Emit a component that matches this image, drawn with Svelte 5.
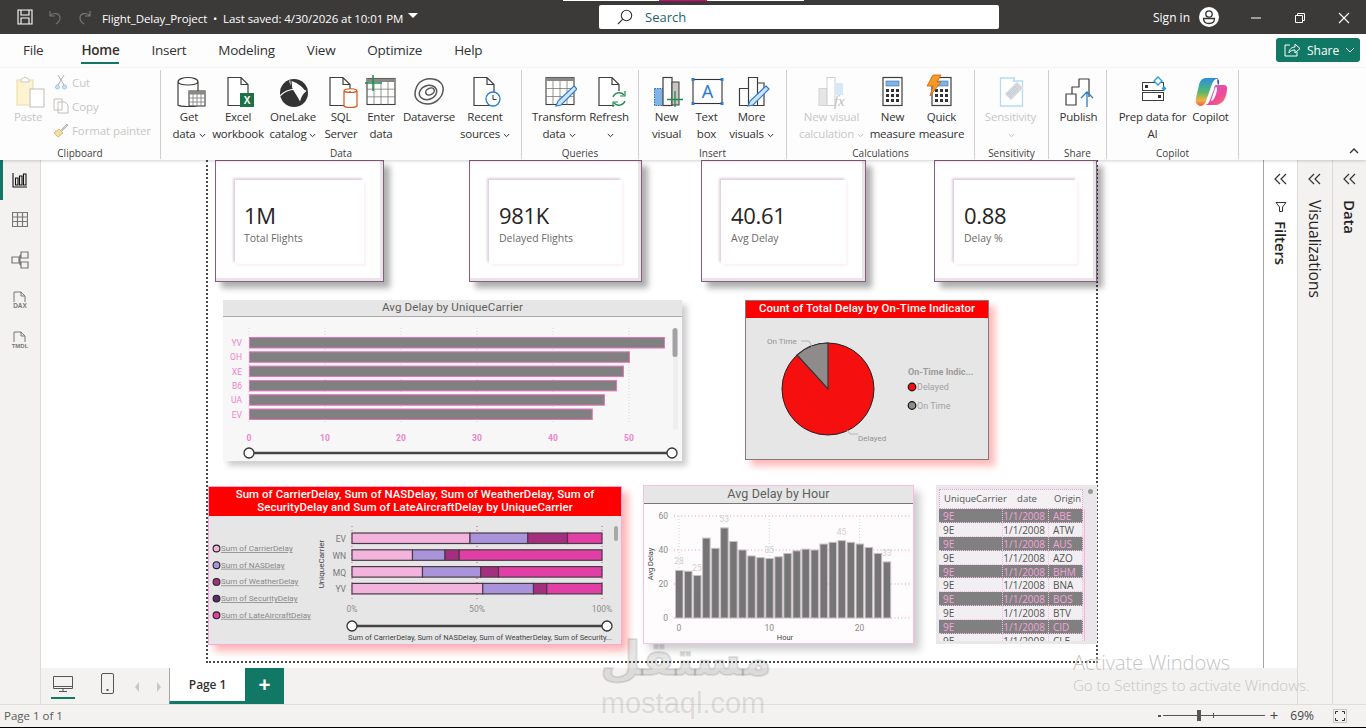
<script>
  const ink = '#3f3e3d';
  const doc = (x) => `<path d="M${x} 3.5h13l7 7v21h-20z M${x + 13} 3.5v7h7" fill="#fff" stroke="${ink}" stroke-width="1.2"/>`;
  const bars = `<path d="M5.5 14.5h9v17h-9z M14.5 3.5h9v28h-9z M23.5 9h6.5v22.5h-6.5z" fill="#fff" stroke="${ink}" stroke-width="1.2"/>`;
  const pencil = (x, y) => `<g transform="translate(${x} ${y})"><path d="M19 0l3 3-16 16-5 1 2-5z" fill="#cfe4f7" stroke="#2b7cd3" stroke-width="1.2"/></g>`;
  const grid = (x, y, w, h) => {
    let s = `<rect x="${x}" y="${y}" width="${w}" height="${h}" fill="#fff" stroke="${ink}" stroke-width="1.1"/>`;
    s += `<rect x="${x}" y="${y}" width="${w}" height="3.5" fill="#8a8886"/>`;
    for (let i = 1; i < 4; i++) s += `<path d="M${x + (w * i) / 4} ${y + 3}v${h - 3}" stroke="#7a7977" stroke-width=".8"/>`;
    for (let i = 1; i < 3; i++) s += `<path d="M${x} ${y + 3 + ((h - 3) * i) / 3}h${w}" stroke="#7a7977" stroke-width=".8"/>`;
    return s;
  };
  const calc = (x) => {
    let s = `<rect x="${x}" y="3.5" width="19" height="28" fill="#fff" stroke="${ink}" stroke-width="1.2"/>`;
    s += `<rect x="${x + 3}" y="7" width="13" height="5" fill="#7fb4e6" stroke="#3b6ea5" stroke-width=".6"/>`;
    for (let r = 0; r < 3; r++) for (let c = 0; c < 3; c++) s += `<rect x="${x + 3 + c * 5}" y="${15 + r * 5}" width="3" height="3" fill="#333"/>`;
    return s;
  };

  const icons = {
    paste: `<rect x="7" y="6" width="16" height="25" fill="#fdf3d0" stroke="#e6d9a8"/><path d="M11 6c0-2 2-2 3-2 0-1 2-1 2 0 1 0 3 0 3 2v2h-8z" fill="#fff" stroke="#c8c6c4"/><rect x="20" y="15" width="14" height="18" fill="#fff" stroke="#c0bebc"/>`,
    getdata: `<path d="M7 8c0-6 20-6 20 0v23c-2 2-18 2-20 0z M7 8c2 4 18 4 20 0" fill="#fff" stroke="${ink}" stroke-width="1.2"/>` + grid(18, 17, 16, 15),
    excel: doc(8) + `<rect x="20" y="19" width="14" height="14" fill="#1e7145"/><text x="27" y="30" font-size="10" font-weight="700" fill="#fff" text-anchor="middle" font-family="Liberation Sans">X</text>`,
    onelake: `<circle cx="19" cy="19" r="14" fill="#333"/><path d="M14 6.500c7 1 13 6 17 11-3 2-5 6-6 10-3-7-9-13-11-21z" fill="#fff"/><path d="M16 7c0 7 1 13 3 20" stroke="#333" fill="none" stroke-width="1.3"/><path d="M5 22c7-8 16-8 26-5" stroke="#fff" fill="none" stroke-width="1.1"/>`,
    sql: doc(7) + `<path d="M21 17c0-3 13-3 13 0v15c-2 2-11 2-13 0z M21 17c2 2 11 2 13 0" fill="#fff" stroke="#d1571c" stroke-width="1.2"/>`,
    enter: grid(4, 4.5, 28, 26) + `<path d="M2 9h17 M10 1v16" stroke="#1e8a4c" stroke-width="1.5"/>`,
    dataverse: `<g fill="none" stroke="#555" stroke-width="1.5"><path d="M6 12c3-6 10-8 16-7 7 1 11 6 10 12-1 7-8 13-15 13C10 30 4 26 4 20c0-3 1-6 2-8z"/><ellipse cx="17" cy="18.500" rx="9" ry="7" transform="rotate(-20 17 18.500)"/><ellipse cx="19" cy="17.500" rx="4.500" ry="3.200" transform="rotate(-25 19 17.500)"/></g>`,
    recent: doc(7) + `<circle cx="26" cy="25" r="7" fill="#fff" stroke="#2b7cd3" stroke-width="1.3"/><path d="M26 21v4.500h3.500" fill="none" stroke="#333"/>`,
    transform: grid(5, 3.5, 28, 27) + pencil(14, 12),
    refresh: doc(8) + `<circle cx="28" cy="25" r="8" fill="#fff"/><path d="M22 23a6.500 6.500 0 0 1 11-2 M34 27a6.500 6.500 0 0 1-11 2" fill="none" stroke="#1e8a4c" stroke-width="1.3"/><path d="M34 17v5h-5 M22 33v-5h5" fill="none" stroke="#1e8a4c" stroke-width="1.2"/>`,
    newvisual: `<rect x="5.5" y="14.5" width="9" height="17" fill="#7fb4e6" stroke="#2b6cb0" stroke-dasharray="1.5 1"/><rect x="14" y="3.5" width="9" height="28" fill="#fff" stroke="${ink}" stroke-width="1.2"/><rect x="23" y="8" width="7" height="23" fill="#c8c6c4" stroke="${ink}"/><path d="M18 25.500h16 M26 17v16" stroke="#1e8a4c" stroke-width="1.3"/>`,
    textbox: `<rect x="4" y="5.5" width="29" height="24" fill="#fff" stroke="#333" stroke-width="1.1"/><g fill="#2b7cd3"><rect x="2.5" y="4" width="3" height="3"/><rect x="31.5" y="4" width="3" height="3"/><rect x="2.5" y="28" width="3" height="3"/><rect x="31.5" y="28" width="3" height="3"/></g><text x="18.5" y="24" font-size="18" fill="#2b7cd3" text-anchor="middle" font-family="Noto Sans">A</text>`,
    more: bars + pencil(13, 12),
    visualcalc: `<rect x="5" y="14.5" width="8" height="17" fill="#e6e6e6" stroke="#d4d4d4"/><rect x="13" y="3.5" width="8" height="28" fill="#fff" stroke="#cfcfcf"/><rect x="21" y="9" width="8" height="12" fill="#d5e9f9"/><text x="20" y="32" font-size="15" font-style="italic" fill="#bdbdbd" font-family="Liberation Serif">fx</text>`,
    measure: calc(8),
    quick: calc(8) + `<path d="M9 1h8l-4 7h4L6 22l3-10H3z" fill="#f59a23" stroke="#c8601a" stroke-width=".8"/>`,
    sensitivity: `<path d="M7.5 4h14l-1 3 9 0v25h-22z" fill="#fff" stroke="#b3dcf5" stroke-width="1.3"/><path d="M12 20l12-12 6 6-12 12z" fill="#d6d6d6" stroke="#e8e8e8"/><path d="M14 21l9-9 M16 23l9-9" stroke="#a9d4ef"/>`,
    publish: `<path d="M5 20h10v11H5z M11 20v-7h7V5h10v18" fill="#fff" stroke="${ink}" stroke-width="1.2" stroke-linejoin="round"/><path d="M26 18v15 M20 24l6-6 6 6" fill="none" stroke="#2b7cd3" stroke-width="1.3"/>`,
    prep: `<rect x="7.5" y="8.5" width="21" height="8" fill="#fff" stroke="${ink}"/><rect x="10" y="11" width="3" height="3" fill="#333"/><rect x="7.5" y="18.5" width="21" height="8" fill="#fff" stroke="${ink}"/><rect x="23" y="21" width="3" height="3" fill="#333"/><path d="M23 3l4 4-4 4-4-4z" fill="#fff" stroke="#2b9cd8" stroke-width="1.3"/><path d="M29 12l2.500 2.500-2.500 2.500-2.500-2.500z" fill="#2b9cd8"/>`,
    copilot: `<defs><linearGradient id="cpa" x1="0" y1="0" x2="0" y2="1"><stop offset="0" stop-color="#2a8fdc"/><stop offset=".5" stop-color="#55b96a"/><stop offset=".8" stop-color="#f2b13c"/><stop offset="1" stop-color="#ec5b4a"/></linearGradient><linearGradient id="cpb" x1="0" y1="0" x2="1" y2="1"><stop offset="0" stop-color="#b86fd0"/><stop offset=".6" stop-color="#f0479a"/><stop offset="1" stop-color="#f6785a"/></linearGradient></defs><path d="M13 4h12c-3 1-5 3-6 6l-6 17c-1 3-3 5-6 5-3-1-5-3-4-8l3-13c1-4 3-7 7-7z" fill="url(#cpa)"/><path d="M23 11h8c2 0 3 1 3 3 0 9-4 17-12 17H11c3 0 5-2 6-5l4-11c0-2 1-4 2-4z" fill="url(#cpb)"/><path d="M23 13c-1 0-2 5-4 11-1 2-1 3 0 3 2-1 4-6 5-11 0-2 0-3-1-3z" fill="#fff"/><path d="M25 4l-3 0c2 0 5 1 4 6l-1 1c-1-3-1-5 0-7z" fill="#2d4fb0"/>`,
  };

  const groups = [
    { label: 'Data', items: [
      { icon: 'getdata', lines: ['Get', 'data'], caret: true, w: 42 },
      { icon: 'excel', lines: ['Excel', 'workbook'], w: 56 },
      { icon: 'onelake', lines: ['OneLake', 'catalog'], caret: true, w: 54 },
      { icon: 'sql', lines: ['SQL', 'Server'], w: 42 },
      { icon: 'enter', lines: ['Enter', 'data'], w: 38 },
      { icon: 'dataverse', lines: ['Dataverse'], w: 58 },
      { icon: 'recent', lines: ['Recent', 'sources'], caret: true, w: 54 },
    ], width: 361 },
    { label: 'Queries', items: [
      { icon: 'transform', lines: ['Transform', 'data'], caret: true, w: 58 },
      { icon: 'refresh', lines: ['Refresh', ''], caret: true, w: 42 },
    ], width: 117 },
    { label: 'Insert', items: [
      { icon: 'newvisual', lines: ['New', 'visual'], w: 38 },
      { icon: 'textbox', lines: ['Text', 'box'], w: 42 },
      { icon: 'more', lines: ['More', 'visuals'], caret: true, w: 48 },
    ], width: 148 },
    { label: 'Calculations', items: [
      { icon: 'visualcalc', lines: ['New visual', 'calculation'], caret: true, w: 70, off: true },
      { icon: 'measure', lines: ['New', 'measure'], w: 52 },
      { icon: 'quick', lines: ['Quick', 'measure'], w: 46 },
    ], width: 188 },
    { label: 'Sensitivity', items: [
      { icon: 'sensitivity', lines: ['Sensitivity', ''], caret: true, w: 66, off: true },
    ], width: 74 },
    { label: 'Share', items: [{ icon: 'publish', lines: ['Publish'], w: 50 }], width: 58 },
    { label: 'Copilot', items: [
      { icon: 'prep', lines: ['Prep data for', 'AI'], w: 72 },
      { icon: 'copilot', lines: ['Copilot'], w: 44 },
    ], width: 132 },
  ];

  const tabs = ['File', 'Home', 'Insert', 'Modeling', 'View', 'Optimize', 'Help'];

  const cards = [
    { value: '1M', label: 'Total Flights', cls: 'c1' },
    { value: '981K', label: 'Delayed Flights', cls: 'c2' },
    { value: '40.61', label: 'Avg Delay', cls: 'c3' },
    { value: '0.88', label: 'Delay %', cls: 'c4' },
  ];

  const carriers = [['YV', 54.6], ['OH', 50], ['XE', 49.2], ['B6', 48.3], ['UA', 46.7], ['EV', 45.1]];

  const stackColors = ['#f2b3dc', '#a994db', '#a52f7f', '#e13fa6'];
  const stacked = [
    ['EV', [47.2, 23.1, 15.9, 13.8]],
    ['WN', [24.2, 13, 5.7, 57.1]],
    ['MQ', [28.2, 23.3, 7.1, 41.4]],
    ['YV', [52.3, 20.3, 5.3, 22.1]],
  ];
  const stackLegend = [
    ['Sum of CarrierDelay', '#f2b3dc'],
    ['Sum of NASDelay', '#a994db'],
    ['Sum of WeatherDelay', '#a52f7f'],
    ['Sum of SecurityDelay', '#5c2a6e'],
    ['Sum of LateAircraftDelay', '#e13fa6'],
  ];
  const segments = (vals) => {
    let x = 0;
    return vals.map((v, i) => {
      const s = { x: x * 2.5, w: v * 2.5, fill: stackColors[i] };
      x += v;
      return s;
    });
  };

  const hours = [28, 27.5, 25, 47, 41, 53, 45, 40, 36.5, 35.5, 35, 36, 38, 39.5, 40.5, 40, 43.5, 44.5, 45.5, 44.5, 43.5, 41.5, 38, 33];
  const hourLabels = { 0: 28, 2: 25, 5: 53, 10: 35, 18: 45, 23: 33 };

  const origins = ['ABE', 'ATW', 'AUS', 'AZO', 'BHM', 'BNA', 'BOS', 'BTV', 'CID', 'CLE'];
</script>

{#snippet caret()}
  <svg class="caret" viewBox="0 0 7 5" width="7" height="5"><path d="M.8 1l2.700 2.700L6.200 1" fill="none" stroke="currentColor" stroke-width="1"/></svg>
{/snippet}

{#snippet chevrons()}
  <svg class="chev" viewBox="0 0 14 12" width="14" height="12"><path d="M6 1L1 6l5 5 M12 1L7 6l5 5" fill="none" stroke="#333" stroke-width="1.200"/></svg>
{/snippet}

<div class="app">
  <header class="titlebar">
    <svg class="save" viewBox="0 0 16 16" width="16" height="16"><path d="M1 1h14v14H1z M4 1v5h8V1 M4 15V9h8v6" fill="none" stroke="#fff" stroke-width="1.100"/></svg>
    <svg class="undo" viewBox="0 0 16 16" width="16" height="16"><path d="M3 2v5h5 M3 7c3-4 10-3 10 2 0 2-1 4-4 6" fill="none" stroke="#7b7a79" stroke-width="1.200"/></svg>
    <svg class="redo" viewBox="0 0 16 16" width="16" height="16"><path d="M13 2v5H8 M13 7c-3-4-10-3-10 2 0 2 1 4 4 6" fill="none" stroke="#7b7a79" stroke-width="1.200"/></svg>
    <span class="doc-title">Flight_Delay_Project &nbsp;•&nbsp; Last saved: 4/30/2026 at 10:01 PM</span>
    <span class="title-caret"></span>
    <div class="search-wrap">
      <div class="search">
        <svg viewBox="0 0 16 16" width="16" height="16"><circle cx="9.500" cy="6.500" r="5.200" fill="none" stroke="#333" stroke-width="1.100"/><path d="M5.800 10.200L1 15" stroke="#333" stroke-width="1.100"/></svg>
        <span>Search</span>
      </div>
    </div>
    <span class="signin">Sign in</span>
    <svg class="avatar" viewBox="0 0 20 20" width="20" height="20"><circle cx="10" cy="10" r="10" fill="#fff"/><circle cx="10" cy="7" r="3.200" fill="none" stroke="#333" stroke-width="1.300"/><path d="M4.500 11.500h11c0 3-2 5-5.500 5s-5.500-2-5.500-5z" fill="none" stroke="#333" stroke-width="1.300"/></svg>
    <div class="win">
      <svg viewBox="0 0 12 12" width="12" height="12"><path d="M1 6h10" stroke="#fff"/></svg>
      <svg viewBox="0 0 12 12" width="12" height="12"><path d="M1.500 3.500h7v7h-7z M3.500 3V1.500h7v7H9" fill="none" stroke="#fff"/></svg>
      <svg viewBox="0 0 12 12" width="12" height="12"><path d="M1 1l10 10M11 1L1 11" stroke="#fff" stroke-width="1.100"/></svg>
    </div>
  </header>

  <nav class="tabs">
    {#each tabs as t}
      <span class="tab" class:active={t === 'Home'}>{t}</span>
    {/each}
    <button class="share" type="button">
      <svg viewBox="0 0 18 16" width="18" height="16"><path d="M7 3H2v11h12v-4" fill="none" stroke="#fff"/><path d="M6 11c0-4 3-6 6-6V2l5 4.500L12 11V8c-3 0-5 1-6 3z" fill="none" stroke="#fff"/></svg>
      Share
      <svg viewBox="0 0 10 6" width="10" height="6"><path d="M1 1l4 4 4-4" fill="none" stroke="#fff"/></svg>
    </button>
  </nav>

  <section class="ribbon">
    <div class="group clipboard">
      <div class="group-body">
        <div class="rbtn off paste">
          <svg viewBox="0 0 36 36" width="36" height="36">{@html icons.paste}</svg>
          <div class="rlabel">Paste</div>
        </div>
        <div class="small-list">
          <div class="small">
            <svg viewBox="0 0 14 16" width="16" height="16"><path d="M4 1l6 10M10 1L4 11" stroke="#b0aeac" fill="none"/><circle cx="3.500" cy="13" r="2" fill="#cfe4f7" stroke="#9cc3e6"/><circle cx="10.500" cy="13" r="2" fill="#cfe4f7" stroke="#9cc3e6"/></svg>
            Cut
          </div>
          <div class="small">
            <svg viewBox="0 0 16 16" width="16" height="16"><path d="M1 1h8v11H1z M5 4h7l3 3v8H5z" fill="#fff" stroke="#c0bebc"/></svg>
            Copy
          </div>
          <div class="small">
            <svg viewBox="0 0 16 16" width="16" height="16"><path d="M1 11l5-4 4 4-5 4z" fill="#f5dfa8" stroke="#d8b877"/><path d="M8 8l6-6 1 1-6 6" fill="#cfcdcb" stroke="#b8b6b4"/></svg>
            Format painter
          </div>
        </div>
      </div>
      <div class="group-label">Clipboard</div>
    </div>

    {#each groups as g}
      <div class="group g-{g.label}" style="width: {g.width}px">
        <div class="group-body">
          {#each g.items as b}
            <div class="rbtn" class:off={b.off} style="width: {b.w}px">
              <svg viewBox="0 0 36 36" width="36" height="36">{@html icons[b.icon]}</svg>
              <div class="rlabel">
                {#each b.lines as line, i}
                  <div class="rline">{line}{#if b.caret && i === b.lines.length - 1}{@render caret()}{/if}</div>
                {/each}
              </div>
            </div>
          {/each}
        </div>
        <div class="group-label">{g.label}</div>
      </div>
    {/each}
    <svg class="collapse" viewBox="0 0 10 6" width="10" height="6"><path d="M1 5l4-4 4 4" fill="none" stroke="#333" stroke-width="1.400"/></svg>
  </section>

  <div class="workspace">
    <aside class="leftnav">
      <div class="nav-item active">
        <svg viewBox="0 0 16 16" width="16" height="16"><path d="M1 1v14h14 M3.500 13V6h2.500v7z M7.500 13V4H10v9z M11.500 13V2H14v11z" fill="none" stroke="#111" stroke-width="1.100"/></svg>
      </div>
      <div class="nav-item">
        <svg viewBox="0 0 16 16" width="16" height="16"><path d="M.5 .5h15v14h-15z M.5 5h15 M.5 9.500h15 M5.500 .5v14 M10.500 .5v14" fill="none" stroke="#777" stroke-width="1.200"/></svg>
      </div>
      <div class="nav-item">
        <svg viewBox="0 0 18 18" width="18" height="18"><path d="M1 6h7v6H1z M10 1h7v6h-7z M10 11h7v6h-7z M8 9h1 M9 4v10 M9 4h1 M9 14h1" fill="none" stroke="#777" stroke-width="1.200"/></svg>
      </div>
      <div class="nav-item">
        <svg viewBox="0 0 20 18" width="20" height="18"><path d="M4 11V1h7l4 4v6 M11 1v4h4" fill="none" stroke="#777"/><text x="10" y="16.500" font-size="6.500" font-weight="700" text-anchor="middle" fill="#777" font-family="Liberation Sans">DAX</text></svg>
      </div>
      <div class="nav-item">
        <svg viewBox="0 0 22 18" width="22" height="18"><path d="M5 11V1h7l4 4v6 M12 1v4h4" fill="none" stroke="#777"/><text x="11" y="16.500" font-size="6" font-weight="700" text-anchor="middle" fill="#777" font-family="Liberation Sans">TMDL</text></svg>
      </div>
    </aside>

    <div class="center">
      <div class="upper">
        <main class="canvas">
          <div class="page">
            {#each cards as c}
              <div class="card {c.cls}">
                <div class="card-inner">
                  <div class="card-value">{c.value}</div>
                  <div class="card-label">{c.label}</div>
                </div>
              </div>
            {/each}

            <div class="visual v-bars">
              <div class="vtitle grey">Avg Delay by UniqueCarrier</div>
              <svg viewBox="0 0 459 144" width="459" height="144">
                {#each [0, 10, 20, 30, 40, 50] as t}
                  <line class="vgrid" x1={26 + t * 7.6} x2={26 + t * 7.6} y1="11" y2="106" />
                  <text class="xtick" x={26 + t * 7.6} y="124" text-anchor="middle">{t}</text>
                {/each}
                {#each carriers as [name, v], i}
                  <rect class="hbar" x="26.5" y={20.5 + i * 14.3} width={v * 7.6} height="10.5" />
                  <text class="cat" x="19" y={29 + i * 14.3} text-anchor="end">{name}</text>
                {/each}
                <rect x="450" y="11" width="5" height="102" rx="2.5" fill="#efedef" />
                <rect x="449.5" y="11" width="5" height="29" rx="2.5" fill="#a3a1a3" />
                <line class="slider" x1="26" x2="449" y1="136" y2="136" />
                <circle class="handle" cx="26" cy="136" r="5" />
                <circle class="handle" cx="449" cy="136" r="5" />
              </svg>
            </div>

            <div class="visual v-pie">
              <div class="vtitle red">Count of Total Delay by On-Time Indicator</div>
              <svg viewBox="0 0 241 142" width="241" height="142">
                <circle cx="82" cy="71" r="46" fill="#f50f0f" stroke="#222" />
                <path d="M82 71V25A46 46 0 0 0 51 37z" fill="#8f8b8b" stroke="#333" stroke-width="1.2" />
                <path class="leader" d="M55 23h8l3 6" />
                <text class="pie-lbl" x="21" y="26">On Time</text>
                <path class="leader" d="M101 112l3 4h8" />
                <text class="pie-lbl" x="112" y="123">Delayed</text>
                <text class="pie-legend" x="162" y="57">On-Time Indic...</text>
                <circle cx="166" cy="69" r="3.8" fill="#f50f0f" stroke="#111" stroke-width="1.2" />
                <text class="pie-lbl big" x="171" y="72">Delayed</text>
                <circle cx="166" cy="87.5" r="3.8" fill="#8f8b8b" stroke="#111" stroke-width="1.2" />
                <text class="pie-lbl big" x="171" y="90.5">On Time</text>
              </svg>
            </div>

            <div class="visual v-stack">
              <div class="vtitle red two">Sum of CarrierDelay, Sum of NASDelay, Sum of WeatherDelay, Sum of SecurityDelay and Sum of LateAircraftDelay by UniqueCarrier</div>
              <svg viewBox="0 0 412 129" width="412" height="129">
                {#each stackLegend as [name, color], i}
                  <circle cx="7.5" cy={32.5 + i * 16.7} r="3.4" fill={color} stroke="#222" stroke-width="1.1" />
                  <text class="stack-legend" x="12" y={35 + i * 16.7}>{name}</text>
                {/each}
                <text class="axis-title" transform="translate(115 48) rotate(-90)" text-anchor="middle">UniqueCarrier</text>
                {#each [0, 50, 100] as t}
                  <line class="redgrid" x1={143 + t * 2.5} x2={143 + t * 2.5} y1="10" y2="86" />
                  <text class="stack-tick" x={143 + t * 2.5} y="96" text-anchor="middle">{t}%</text>
                {/each}
                {#each stacked as [name, vals], i}
                  <text class="stack-cat" x="137" y={26 + i * 16.8} text-anchor="end">{name}</text>
                  {#each segments(vals) as s}
                    <rect class="seg" x={143 + s.x} y={17 + i * 16.8} width={s.w} height="10.5" fill={s.fill} />
                  {/each}
                {/each}
                <rect x="405" y="10" width="4" height="15" rx="2" fill="#a9a7a9" />
                <line class="slider" x1="143" x2="398" y1="110" y2="110" />
                <circle class="handle" cx="143" cy="110" r="5" />
                <circle class="handle" cx="398" cy="110" r="5" />
                <text class="stack-axis" x="139" y="124">Sum of CarrierDelay, Sum of NASDelay, Sum of WeatherDelay, Sum of Security...</text>
              </svg>
            </div>

            <div class="visual v-column">
              <div class="vtitle grey dark-rule">Avg Delay by Hour</div>
              <svg viewBox="0 0 269 141" width="269" height="141">
                {#each [0, 20, 40, 60] as t}
                  <line class="pinkgrid" x1="30" x2="266" y1={114 - t * 1.7} y2={114 - t * 1.7} />
                  <text class="col-tick" x="24" y={117 - t * 1.7} text-anchor="end">{t}</text>
                {/each}
                {#each [0, 10, 20] as t}
                  <line class="vgrid" x1={35 + t * 9.03} x2={35 + t * 9.03} y1="12" y2="114" />
                  <text class="col-tick" x={35 + t * 9.03} y="127" text-anchor="middle">{t}</text>
                {/each}
                {#each hours as v, i}
                  <rect class="colbar" x={31.5 + i * 9.03} y={114 - v * 1.7} width="7.5" height={v * 1.7} />
                  {#if hourLabels[i]}
                    <text class="col-lbl" x={35 + i * 9.03} y={111 - v * 1.7 - (i === 2 ? 2 : 3)} text-anchor="middle">{hourLabels[i]}</text>
                  {/if}
                {/each}
                <text class="col-axis" transform="translate(9 60) rotate(-90)" text-anchor="middle">Avg Delay</text>
                <text class="col-axis" x="141" y="136" text-anchor="middle">Hour</text>
              </svg>
            </div>

            <div class="visual v-table">
              <div class="thead">
                <span>UniqueCarrier</span><span class="mid">date</span><span>Origin</span>
              </div>
              <div class="tbody">
                {#each origins as o, i}
                  <div class="trow" class:shade={i % 2 === 0}>
                    <span>9E</span><span class="num">1/1/2008</span><span>{o}</span>
                  </div>
                {/each}
              </div>
              <div class="tscroll"></div>
            </div>
          </div>
        </main>

        <aside class="panel filters">
          {@render chevrons()}
          <svg class="funnel" viewBox="0 0 12 12" width="12" height="12"><path d="M1 1.500h10L7.500 6v4.500h-3V6z" fill="none" stroke="#333"/></svg>
          <span class="vtext">Filters</span>
        </aside>
      </div>

      <div class="pagebar">
        <div class="device on">
          <svg viewBox="0 0 20 16" width="20" height="16"><path d="M.5 .5h19v12H.5z" fill="none" stroke="#555"/><path d="M1 10.500h18 M10 13v2 M6 15.500h8" stroke="#555"/></svg>
        </div>
        <div class="device">
          <svg viewBox="0 0 13 21" width="13" height="21"><rect x=".5" y=".5" width="12" height="20" rx="1.500" fill="none" stroke="#555"/><rect x="5.500" y="16" width="2" height="2" fill="#555"/></svg>
        </div>
        <div class="page-arrows">
          <span class="arrow-l"></span>
          <span class="arrow-r"></span>
        </div>
        <div class="page-tab">Page 1</div>
        <div class="add-tab">+</div>
      </div>
    </div>

    <aside class="panel viz">
      {@render chevrons()}
      <span class="vtext">Visualizations</span>
    </aside>
    <aside class="panel data">
      {@render chevrons()}
      <span class="vtext">Data</span>
    </aside>
  </div>

  <footer class="status">
    <span>Page 1 of 1</span>
    <div class="zoom">
      <span class="minus"></span>
      <div class="track"><span class="thumb"></span><span class="tick"></span></div>
      <span class="plus">+</span>
      <span class="pct">69%</span>
      <svg viewBox="0 0 14 14" width="14" height="14"><path d="M.5 .5h13v13H.5z" fill="none" stroke="#c8c6c4"/><path d="M2.500 5V2.500H5 M9 2.500h2.500V5 M11.500 9v2.500H9 M5 11.500H2.500V9" fill="none" stroke="#333"/></svg>
    </div>
  </footer>

  <div class="watermark" aria-hidden="true">
    <div class="wm-ar">مستقل</div>
    <div class="wm-en">mostaql.com</div>
  </div>
  <div class="activate">
    <div class="a1">Activate Windows</div>
    <div class="a2">Go to Settings to activate Windows.</div>
  </div>
</div>

<style>
  :global(body) {
    margin: 0;
    background: #000;
  }

  .app {
    position: relative;
    width: 1366px;
    height: 728px;
    overflow: hidden;
    display: flex;
    flex-direction: column;
    background: #fff;
    font-family: "Open Sans", "Noto Sans", sans-serif;
    color: #323130;
  }

  /* title bar */
  .titlebar {
    flex: 0 0 34px;
    display: flex;
    align-items: center;
    background: #3b3a39;
    color: #fff;
    position: relative;
    font-size: 12px;
  }
  .save { margin-left: 17px; }
  .undo { margin-left: 14px; opacity: .9; }
  .redo { margin-left: 14px; }
  .doc-title {
    margin-left: 9px;
    margin-top: 2px;
    width: 300px;
    white-space: nowrap;
    font-size: 11.5px;
    letter-spacing: -.07px;
  }
  .title-caret {
    width: 0;
    height: 0;
    margin: -3px 0 0 6px;
    border-left: 5px solid transparent;
    border-right: 5px solid transparent;
    border-top: 5px solid #fff;
  }
  .search-wrap {
    position: absolute;
    left: 563px;
    top: 0;
    width: 241px;
    height: 1px;
    background: linear-gradient(90deg, #fff 0 96px, #e6007e 96px 144px, #fff 144px);
  }
  .search {
    position: absolute;
    left: 36px;
    top: 5px;
    width: 400px;
    height: 24px;
    box-sizing: border-box;
    padding-left: 18px;
    display: flex;
    align-items: center;
    gap: 12px;
    background: #fff;
    border-radius: 2px;
    color: #22646c;
    font-size: 13px;
  }
  .signin {
    position: absolute;
    left: 1153px;
    top: 9px;
    font-size: 12px;
  }
  .avatar {
    position: absolute;
    left: 1199px;
    top: 7px;
  }
  .win {
    position: absolute;
    left: 1250px;
    top: 12px;
    display: flex;
    gap: 32px;
  }

  /* tabs */
  .tabs {
    flex: 0 0 34px;
    position: relative;
    display: flex;
    align-items: flex-start;
    padding-left: 23px;
    gap: 32px;
    background: #fdfdfd;
    font-size: 13.5px;
  }
  .tab {
    height: 31px;
    line-height: 32px;
    letter-spacing: -.25px;
  }
  .tab.active {
    margin-left: 6px;
    font-weight: 600;
    border-bottom: 2.5px solid #117865;
    height: 28px;
  }
  .share {
    position: absolute;
    left: 1276px;
    top: 4px;
    width: 84px;
    height: 24px;
    padding: 0 0 0 7px;
    display: flex;
    align-items: center;
    gap: 6px;
    border: 0;
    border-radius: 3px;
    background: #117865;
    color: #fff;
    font: 12px "Open Sans", sans-serif;
  }

  /* ribbon */
  .ribbon {
    flex: 0 0 92px;
    position: relative;
    z-index: 2;
    display: flex;
    background: #fdfdfd;
    box-shadow: 0 1px 3px rgba(0, 0, 0, .18);
  }
  .group {
    box-sizing: border-box;
    position: relative;
    display: flex;
    flex-direction: column;
    height: 89px;
    margin-top: 2px;
    border-right: 1px solid #d2d0ce;
  }
  .group-body {
    flex: 0 0 75px;
    min-height: 0;
    box-sizing: border-box;
    display: flex;
    justify-content: center;
    padding-top: 4px;
  }
  .g-Data .group-body, .g-Insert .group-body, .g-Sensitivity .group-body { padding-right: 2px; }
  .g-Share .group-body { padding-left: 2px; }
  .g-Copilot .group-body { padding-left: 4px; }
  .group-label {
    height: 14px;
    line-height: 16px;
    text-align: center;
    font-size: 10px;
    color: #3f3e3d;
  }
  .rbtn {
    display: flex;
    flex-direction: column;
    align-items: center;
    font-size: 11.5px;
    letter-spacing: -.22px;
  }
  .rbtn.off { color: #c8c6c4; }
  .rlabel {
    margin-top: -1px;
    line-height: 16.5px;
    text-align: center;
    white-space: nowrap;
  }
  .rline { min-height: 16.5px; }
  .caret {
    margin-left: 3px;
    vertical-align: 0;
  }
  .clipboard { width: 161px; }
  .clipboard .group-body {
    justify-content: flex-start;
    padding-left: 10px;
    gap: 7px;
  }
  .paste { width: 36px; }
  .small-list {
    display: flex;
    flex-direction: column;
    gap: 6px;
    margin-top: -1px;
  }
  .small {
    height: 18px;
    display: flex;
    align-items: center;
    gap: 3px;
    font-size: 11.5px;
    letter-spacing: -.1px;
    color: #c8c6c4;
    white-space: nowrap;
  }
  .collapse {
    position: absolute;
    right: 7px;
    bottom: 6px;
  }

  /* workspace */
  .workspace {
    flex: 1;
    display: flex;
    min-height: 0;
    background: #f3f2f1;
  }
  .leftnav {
    flex: 0 0 41px;
    box-sizing: border-box;
    border-right: 1px solid #dddbd9;
    background: #f3f2f1;
  }
  .nav-item {
    height: 40px;
    display: flex;
    align-items: center;
    justify-content: center;
    padding-right: 1px;
  }
  .nav-item.active {
    box-shadow: inset 3px 0 0 #117865;
  }
  .center {
    flex: 1;
    display: flex;
    flex-direction: column;
    min-width: 0;
  }
  .upper {
    flex: 0 0 508px;
    display: flex;
  }
  .canvas {
    flex: 1;
    background: #fff;
    overflow: hidden;
    padding-left: 165px;
  }

  .page {
    position: relative;
    width: 888px;
    height: 501px;
    box-sizing: content-box;
    border: 2px dotted #4a4a4a;
    border-top: 0;
  }

  /* KPI cards */
  .card {
    position: absolute;
    top: 0;
    height: 122px;
    box-sizing: border-box;
    border: 1px solid #8c5b85;
    background: #fff;
    box-shadow: inset -3px -3px 0 #e6e6e6, 6px 6px 6px rgba(0, 0, 0, .32);
  }
  .c1 { left: 7px; width: 169px; }
  .c2 { left: 261px; width: 173px; }
  .c3 { left: 493px; width: 165px; }
  .c4 { left: 726px; width: 163px; }
  .card-inner {
    position: absolute;
    left: 19px;
    right: 19px;
    top: 19px;
    bottom: 17px;
    padding: 22px 0 0 10px;
    box-shadow: -2px -2px 2px #e2cfdf, 2px 2px 3px #fbeff7;
  }
  .c1 .card-inner { padding-left: 9px; }
  .card-value {
    font: 500 22px/26px "Open Sans", sans-serif;
    letter-spacing: -.3px;
    color: #252423;
  }
  .card-label {
    margin-top: 3px;
    font: 10.5px/14px "Open Sans", sans-serif;
    color: #6b6967;
  }

  /* visuals */
  .visual {
    position: absolute;
    box-sizing: border-box;
    font-family: Roboto, "Liberation Sans", sans-serif;
  }
  .visual svg { display: block; }
  .vtitle {
    text-align: center;
    font-size: 11.6px;
    line-height: 15px;
    letter-spacing: .1px;
  }
  .vtitle.grey {
    height: 17px;
    background: #e6e6e6;
    color: #605e5c;
    border-bottom: 1px solid #aaa;
    box-sizing: border-box;
  }
  .vtitle.dark-rule { height: 18px; line-height: 16px; border-bottom-color: #777; font-size: 12.5px; }
  .vtitle.red {
    background: #fe0000;
    color: #fff;
    height: 17px;
    font-size: 11.4px;
    font-weight: 500;
  }
  .vtitle.two {
    height: 29px;
    line-height: 13px;
    padding: 1px 15px 0;
    box-sizing: border-box;
  }

  .v-bars {
    left: 15px;
    top: 140px;
    width: 459px;
    height: 161px;
    background: #f8f7f8;
    box-shadow: 5px 5px 6px rgba(0, 0, 0, .2);
  }
  .vgrid {
    stroke: #d8d6d8;
    stroke-width: 1;
    stroke-dasharray: 1 2;
  }
  .xtick {
    font-size: 8.5px;
    font-weight: 700;
    fill: #ee83c9;
  }
  .cat {
    font-size: 8.5px;
    fill: #ee83c9;
  }
  .hbar {
    fill: #808080;
    stroke: #e873ba;
    stroke-width: 1;
  }
  .slider {
    stroke: #444;
    stroke-width: 2.5;
  }
  .handle {
    fill: #fff;
    stroke: #333;
    stroke-width: 1.3;
  }

  .v-pie {
    left: 537px;
    top: 140px;
    width: 244px;
    height: 160px;
    background: #e6e6e6;
    border: 1px solid #85797f;
    box-shadow: 6px 6px 7px rgba(255, 0, 0, .28);
  }
  .leader {
    fill: none;
    stroke: #a6a6a6;
    stroke-width: .8;
  }
  .pie-lbl {
    font-size: 8px;
    fill: #929292;
  }
  .pie-lbl.big { font-size: 9px; fill: #a3a3a3; }
  .pie-legend {
    font-size: 9px;
    font-weight: 700;
    fill: #9b9b9b;
  }

  .v-stack {
    left: 0;
    top: 326px;
    width: 414px;
    height: 159px;
    background: #e6e6e6;
    border: 1px solid #f6a9dc;
    box-shadow: 6px 6px 8px rgba(255, 0, 0, .3);
  }
  .stack-legend {
    font-size: 8.1px;
    fill: #888;
    text-decoration: underline;
  }
  .axis-title {
    font-size: 8px;
    fill: #444;
  }
  .redgrid {
    stroke: #f0457a;
    stroke-dasharray: 1 3;
  }
  .stack-tick {
    font-size: 8.5px;
    fill: #8d8d8d;
  }
  .stack-cat {
    font-size: 8.5px;
    fill: #777;
  }
  .seg {
    stroke: #4a3a48;
    stroke-width: 1.2;
  }
  .stack-axis {
    font-size: 7.5px;
    fill: #444;
  }

  .v-column {
    left: 435px;
    top: 325px;
    width: 271px;
    height: 159px;
    background: #fefcfd;
    border: 1px solid #f7bfe4;
    box-shadow: 6px 6px 8px rgba(0, 0, 0, .2);
  }
  .pinkgrid {
    stroke: #f58fd0;
    stroke-dasharray: 1 2.5;
  }
  .col-tick {
    font-size: 8.5px;
    fill: #8a8a8a;
  }
  .colbar {
    fill: #757575;
    stroke: #c8bfc6;
    stroke-width: 1;
  }
  .col-lbl {
    font-size: 8.5px;
    fill: #cfcfcf;
  }
  .col-axis {
    font-size: 7.5px;
    fill: #444;
  }

  .v-table {
    left: 728px;
    top: 325px;
    width: 161px;
    height: 159px;
    padding: 4px 0 0 3px;
    background: #e9e7e9;
    font: 10px/14px "Open Sans", sans-serif;
    overflow: hidden;
  }
  .thead, .trow {
    display: grid;
    grid-template-columns: 64px 46px 34px;
    width: 144px;
  }
  .thead {
    height: 20px;
    line-height: 18px;
    box-sizing: border-box;
    background: #f3f1f3;
    border: 1px dotted #f39ad4;
    color: #555;
    font-size: 9.5px;
  }
  .thead span { padding-left: 4px; white-space: nowrap; }
  .thead .mid { text-align: center; padding: 0; }
  .tbody {
    height: 132px;
    overflow: hidden;
    border-right: 1px solid #f6b4df;
    width: 145px;
  }
  .trow {
    height: 13.9px;
    line-height: 15px;
    background: #f1eff1;
    color: #555;
    box-sizing: border-box;
    border-bottom: 1px dotted #f5bfe3;
  }
  .trow.shade {
    background: #808080;
    color: #f4a3da;
  }
  .trow span { padding-left: 4px; border-right: 1px dotted #f5bfe3; }
  .trow .num { text-align: right; padding: 0 3px 0 0; }
  .tscroll {
    position: absolute;
    left: 152px;
    top: 4px;
    width: 5px;
    height: 5px;
    border-radius: 50%;
    background: #9a989a;
  }

  /* side panels */
  .panel {
    position: relative;
    box-sizing: border-box;
    display: flex;
    flex-direction: column;
    align-items: center;
    padding-top: 13px;
    font-size: 15.7px;
    color: #252423;
  }
  .filters {
    flex: 0 0 34px;
    background: #fff;
    border-left: 1px solid #a8a6a4;
  }
  .viz, .data {
    flex: 0 0 35px;
    background: #f3f2f1;
    border-left: 1px solid #dddbd9;
  }
  .data { flex-basis: 34px; }
  .vtext {
    writing-mode: vertical-rl;
    margin-top: 15px;
    letter-spacing: -.1px;
  }
  .funnel { margin-top: 16px; }
  .funnel + .vtext { margin-top: 8px; font-weight: 600; font-size: 15px; }
  .data .vtext { font-weight: 600; font-size: 15px; }

  /* page tabs */
  .pagebar {
    flex: 1;
    display: flex;
    align-items: stretch;
    background: #f3f2f1;
    padding-left: 10px;
  }
  .device {
    width: 24px;
    padding-top: 5px;
    display: flex;
    justify-content: center;
    box-sizing: border-box;
  }
  .device.on {
    margin-right: 20px;
    padding-top: 8px;
    height: 31px;
    border-bottom: 2.5px solid #117865;
  }
  .page-arrows {
    margin-left: 16px;
    width: 26px;
    display: flex;
    align-items: center;
    justify-content: space-between;
  }
  .arrow-l, .arrow-r {
    width: 0;
    height: 0;
    border-top: 5px solid transparent;
    border-bottom: 5px solid transparent;
  }
  .arrow-l { border-right: 4px solid #c8c6c4; }
  .arrow-r { border-left: 4px solid #c8c6c4; }
  .page-tab {
    width: 76px;
    margin-left: 8px;
    box-sizing: border-box;
    background: #fff;
    border-left: 1px solid #a8a6a4;
    border-bottom: 4px solid #117865;
    text-align: center;
    font-size: 12px;
    line-height: 33px;
    font-weight: 600;
    letter-spacing: -.1px;
  }
  .add-tab {
    width: 39px;
    background: #117865;
    color: #fff;
    text-align: center;
    font: 700 21px/33px "Open Sans", sans-serif;
  }

  /* status bar */
  .status {
    flex: 0 0 24px;
    box-sizing: border-box;
    display: flex;
    justify-content: space-between;
    align-items: center;
    padding: 0 19px 1px 4px;
    background: #f3f2f1;
    border-top: 1px solid #e0dedd;
    border-bottom: 1px solid #000;
    font-size: 11.5px;
    color: #5c5a58;
  }
  .zoom {
    display: flex;
    align-items: center;
    color: #444;
  }
  .minus {
    width: 3px;
    height: 2px;
    background: #555;
  }
  .track {
    position: relative;
    width: 102px;
    height: 1px;
    margin-left: 2px;
    background: #555;
  }
  .thumb {
    position: absolute;
    left: 34px;
    top: -5px;
    width: 4px;
    height: 11px;
    background: #555;
  }
  .tick {
    position: absolute;
    left: 50px;
    top: -2px;
    width: 1px;
    height: 5px;
    background: #555;
  }
  .plus {
    margin-left: 5px;
    font-size: 15px;
    line-height: 15px;
  }
  .pct {
    margin: 0 19px 0 12px;
    font-size: 12px;
  }

  /* overlays */
  .watermark {
    position: absolute;
    left: 600px;
    top: 630px;
    width: 166px;
    pointer-events: none;
    text-align: center;
    color: rgba(60, 60, 60, .15);
    font-family: "DejaVu Sans", sans-serif;
    font-weight: 700;
  }
  .wm-ar {
    font-size: 47px;
    line-height: 58px;
    -webkit-text-stroke: 2px rgba(60, 60, 60, .15);
  }
  .wm-en {
    font-family: "Liberation Sans", sans-serif;
    font-weight: 400;
    font-size: 29px;
    line-height: 30px;
  }
  .activate {
    position: absolute;
    left: 1073px;
    top: 650px;
    pointer-events: none;
    color: #c5c5c5;
    white-space: nowrap;
    font-family: "Open Sans", sans-serif;
    font-weight: 300;
  }
  .a1 { font-size: 20px; line-height: 25px; }
  .a2 { font-size: 15px; line-height: 21px; }
</style>
